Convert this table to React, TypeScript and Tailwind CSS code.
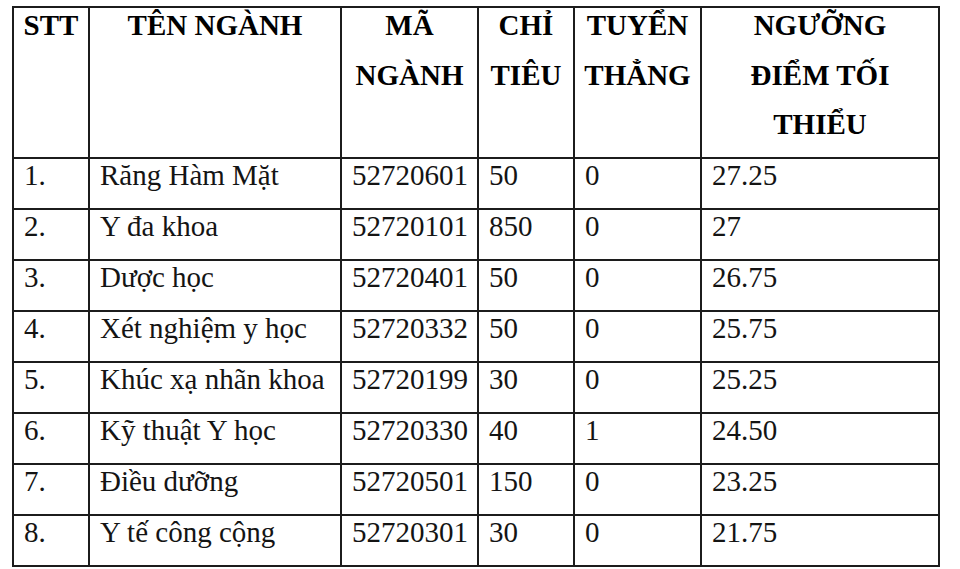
import React from "react";

const rows = [
  ["1.", "Răng Hàm Mặt", "52720601", "50", "0", "27.25"],
  ["2.", "Y đa khoa", "52720101", "850", "0", "27"],
  ["3.", "Dược học", "52720401", "50", "0", "26.75"],
  ["4.", "Xét nghiệm y học", "52720332", "50", "0", "25.75"],
  ["5.", "Khúc xạ nhãn khoa", "52720199", "30", "0", "25.25"],
  ["6.", "Kỹ thuật Y học", "52720330", "40", "1", "24.50"],
  ["7.", "Điều dưỡng", "52720501", "150", "0", "23.25"],
  ["8.", "Y tế công cộng", "52720301", "30", "0", "21.75"],
];

const headers: React.ReactNode[] = [
  <>STT</>,
  <>TÊN NGÀNH</>,
  <>
    MÃ
    <br />
    NGÀNH
  </>,
  <>
    CHỈ
    <br />
    TIÊU
  </>,
  <>
    TUYỂN
    <br />
    THẲNG
  </>,
  <>
    NGƯỠNG
    <br />
    ĐIỂM TỐI
    <br />
    THIỂU
  </>,
];

export default function App() {
  return (
    <div
      className="w-[960px] h-[569px] bg-white overflow-hidden pl-[12px] pt-[6px]"
      style={{ fontFamily: '"Liberation Serif", "Times New Roman", serif' }}
    >
      <div className="grid grid-cols-[76px_252px_137px_96px_127px_238px] grid-rows-[151px_repeat(8,51px)] w-fit border-l-2 border-t-2 border-[#1c1c1c]">
        {headers.map((h, i) => (
          <div
            key={"h" + i}
            className="border-r-2 border-b-2 border-[#1c1c1c] text-center font-bold text-[29px] leading-[49.5px] text-black"
          >
            <div className="-mt-[7px] whitespace-nowrap">{h}</div>
          </div>
        ))}
        {rows.map((r, ri) =>
          r.map((c, ci) => (
            <div
              key={ri + "-" + ci}
              className="border-r-2 border-b-2 border-[#1c1c1c] pl-[10px] text-[29px] leading-[32px] text-[#141414] whitespace-nowrap"
            >
              {c}
            </div>
          ))
        )}
      </div>
    </div>
  );
}
